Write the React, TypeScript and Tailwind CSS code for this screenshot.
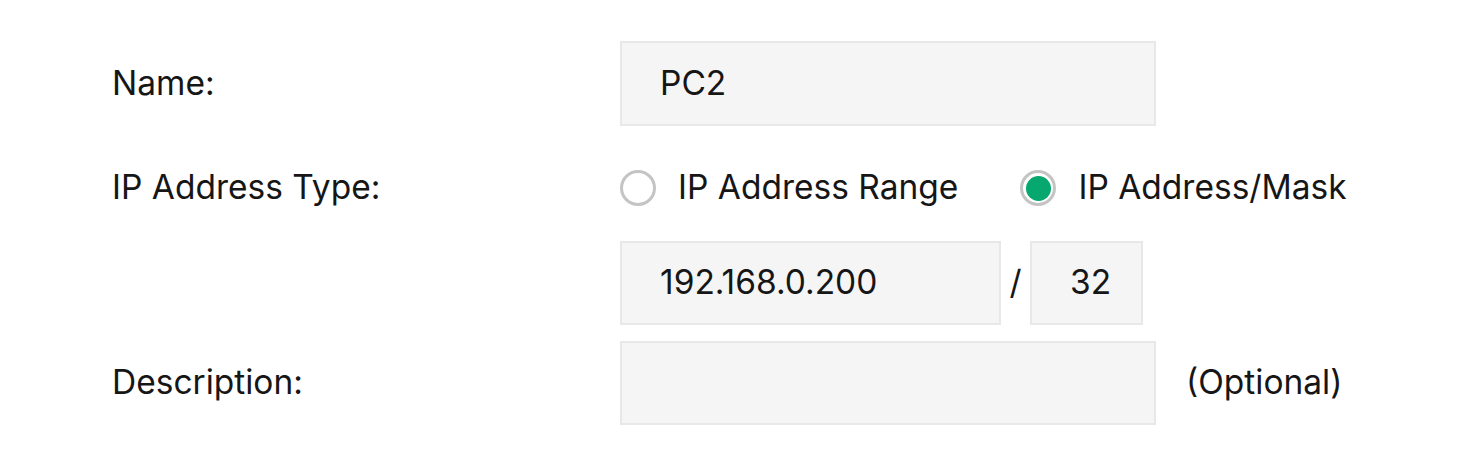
import React from "react";

function Radio({ checked, label }: { checked?: boolean; label: string }) {
  return (
    <div className="flex items-center">
      <span className="w-[36px] h-[36px] rounded-full border-[3px] border-[#c4c4c4] bg-white flex items-center justify-center">
        {checked && <span className="w-[25px] h-[25px] rounded-full bg-[#06a870]" />}
      </span>
      <span className="ml-[22px]">{label}</span>
    </div>
  );
}

export default function App() {
  return (
    <div
      className="w-[1469px] h-[452px] bg-white text-[#161616] text-[33.5px] leading-none pt-[41px] pl-[112px]"
      style={{ fontFamily: "Inter, 'Noto Sans', sans-serif" }}
    >
      <div className="flex items-center h-[85px]">
        <div className="w-[508px]">Name:</div>
        <div className="w-[536px] h-[85px] bg-[#f5f5f5] border-2 border-[#e8e8e8] flex items-center pl-[38px]">PC2</div>
      </div>
      <div className="flex items-center h-[84px] mt-[20px]">
        <div className="w-[508px]">IP Address Type:</div>
        <div className="flex items-center">
          <Radio label="IP Address Range" />
          <div className="ml-[62px]">
            <Radio checked label="IP Address/Mask" />
          </div>
        </div>
      </div>
      <div className="flex items-center h-[84px] mt-[11px]">
        <div className="w-[508px]" />
        <div className="w-[381px] h-[84px] bg-[#f5f5f5] border-2 border-[#e8e8e8] flex items-center pl-[38px]">192.168.0.200</div>
        <div className="w-[29px] text-center">/</div>
        <div className="w-[113px] h-[84px] bg-[#f5f5f5] border-2 border-[#e8e8e8] flex items-center pl-[38px]">32</div>
      </div>
      <div className="flex items-center h-[84px] mt-[16px]">
        <div className="w-[508px]">Description:</div>
        <div className="w-[536px] h-[84px] bg-[#f5f5f5] border-2 border-[#e8e8e8]" />
        <div className="ml-[30px]">(Optional)</div>
      </div>
    </div>
  );
}
